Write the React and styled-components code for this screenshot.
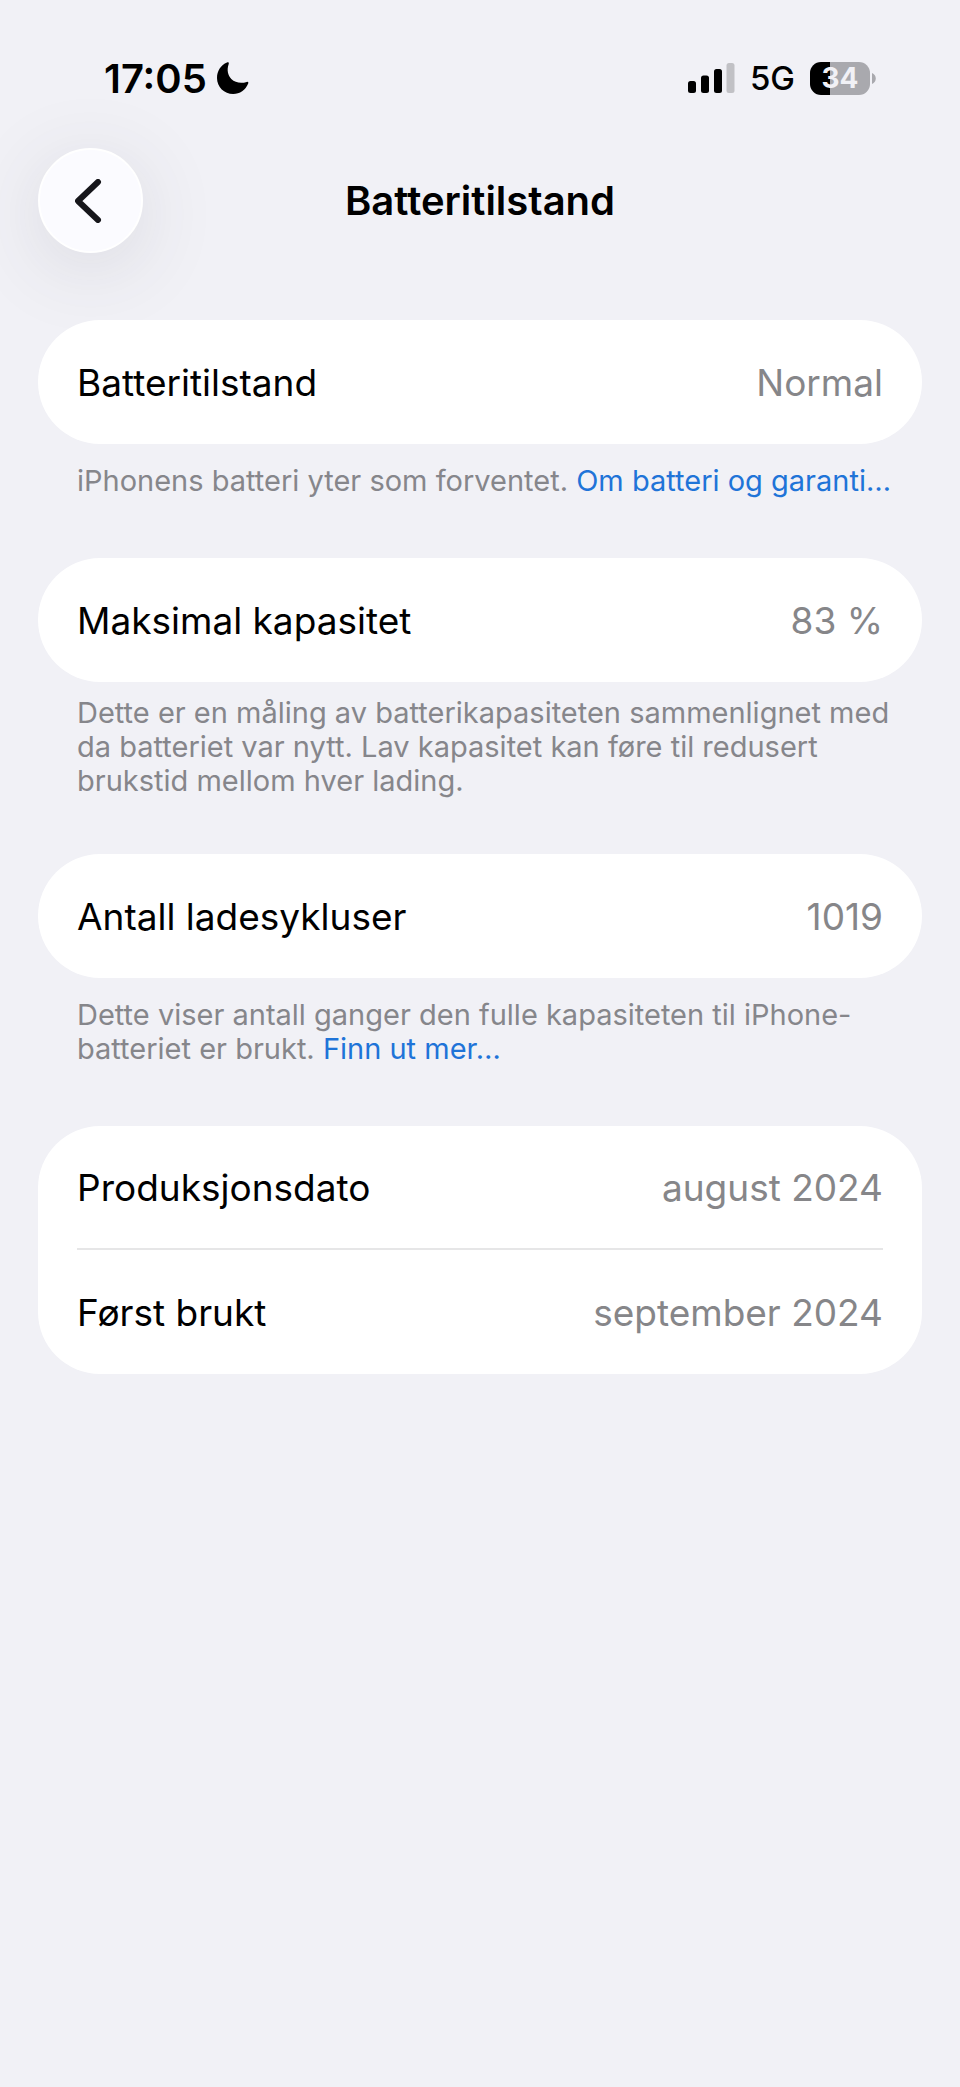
import React from "react";
import styled, { createGlobalStyle } from "styled-components";

const GlobalStyle = createGlobalStyle`
  * {
    box-sizing: border-box;
  }

  body {
    margin: 0;
    background: #f1f1f6;
    color: #000;
    font-family: Inter, "Liberation Sans", sans-serif;
  }
`;

const Screen = styled.div`
  min-height: 100vh;
`;

const StatusBar = styled.header`
  display: flex;
  align-items: center;
  justify-content: space-between;
  height: 148px;
  padding: 8px 84px 0 104px;
`;

const Time = styled.div`
  display: flex;
  align-items: center;
  gap: 10px;
  font-size: 40px;
  font-weight: 600;
`;

const Indicators = styled.div`
  display: flex;
  align-items: center;
  gap: 15px;
`;

const Network = styled.span`
  font-size: 33px;
  font-weight: 500;
`;

const Battery = styled.div`
  display: flex;
  align-items: center;
  gap: 2px;
`;

const BatteryBody = styled.div`
  display: flex;
  align-items: center;
  justify-content: center;
  width: 60px;
  height: 33px;
  border-radius: 11px;
  background: linear-gradient(90deg, #000 ${(props) => props.$level}%, #a9a9ae 0);
  color: #f1f1f6;
  font-size: 28px;
  font-weight: 700;
`;

const NavBar = styled.nav`
  display: grid;
  grid-template-columns: 1fr auto 1fr;
  align-items: center;
  padding: 0 38px;

  > h1 {
    margin: 0;
    font-size: 40px;
    font-weight: 600;
  }
`;

const BackButton = styled.button`
  display: flex;
  align-items: center;
  justify-content: center;
  width: 105px;
  height: 105px;
  padding: 0;
  border: 2px solid #fff;
  border-radius: 50%;
  background: #fbfbff;
  box-shadow: 0 14px 80px rgba(60, 60, 80, 0.13);
  color: #16161b;
`;

const Main = styled.main`
  display: flex;
  flex-direction: column;
  gap: 56px;
  padding: 67px 38px;
`;

const Card = styled.dl`
  margin: 0;
  padding: 0 39px;
  border-radius: 62px;
  background: #fff;
`;

const Row = styled.div`
  display: flex;
  align-items: center;
  justify-content: space-between;
  min-height: 124px;
  font-size: 37px;

  &:not(:last-child) {
    border-bottom: 2px solid #e6e6e7;
  }
  > dd {
    margin: 0;
    color: #868689;
  }
`;

const Note = styled.p`
  margin: 0;
  padding: ${(props) => (props.$linked ? "20px 24px 4px 39px" : "14px 24px 0 39px")};
  color: #86868b;
  font-size: 29px;
  line-height: 34px;

  > a {
    color: #1f74d8;
    text-decoration: none;
  }
`;

const MoonIcon = () => (
  <svg width="32" height="32" viewBox="0 0 32 32" aria-hidden="true">
    <path
      d="M10 .6C11.200 0 12.200.6 11.700 2C9.500 8.200 11 13.500 14.300 17C18.300 20.800 24 21.800 29.700 19.900C31 19.500 31.700 20.300 31.200 21.500C28.500 28 22.800 32 16.200 32C7.200 32 0 25 0 16C0 9 3.800 3.200 10 .6Z"
      fill="#000"
    />
  </svg>
);

const SignalIcon = () => (
  <svg width="47" height="30" viewBox="0 0 47 30" role="img" aria-label="Signal">
    <rect x="0" y="18" width="8" height="12" rx="2.500" />
    <rect x="13" y="12.500" width="8" height="17.500" rx="2.500" />
    <rect x="26" y="6" width="8" height="24" rx="2.500" />
    <rect x="38.500" y="0" width="8" height="30" rx="2.500" fill="#c1c1c5" />
  </svg>
);

const ChevronIcon = () => (
  <svg width="32" height="44" viewBox="0 0 32 44" aria-hidden="true">
    <path
      d="M23 3L3 22L23 41"
      fill="none"
      stroke="currentColor"
      strokeWidth="6"
      strokeLinecap="round"
      strokeLinejoin="round"
    />
  </svg>
);

const BatteryTip = () => (
  <svg width="4" height="11" viewBox="0 0 4 11" aria-hidden="true">
    <path d="M0 0C5 2 5 9 0 11Z" fill="#a9a9ae" />
  </svg>
);

const App = () => {
  const level = 34;

  return (
    <Screen>
      <GlobalStyle />
      <StatusBar>
        <Time>
          <span>17:05</span>
          <MoonIcon />
        </Time>
        <Indicators>
          <SignalIcon />
          <Network>5G</Network>
          <Battery>
            <BatteryBody $level={level}>{level}</BatteryBody>
            <BatteryTip />
          </Battery>
        </Indicators>
      </StatusBar>
      <NavBar>
        <BackButton type="button" aria-label="Tilbake">
          <ChevronIcon />
        </BackButton>
        <h1>Batteritilstand</h1>
      </NavBar>
      <Main>
        <section>
          <Card>
            <Row>
              <dt>Batteritilstand</dt>
              <dd>Normal</dd>
            </Row>
          </Card>
          <Note $linked>
            iPhonens batteri yter som forventet. <a href="#garanti">Om batteri og garanti…</a>
          </Note>
        </section>
        <section>
          <Card>
            <Row>
              <dt>Maksimal kapasitet</dt>
              <dd>83 %</dd>
            </Row>
          </Card>
          <Note>
            Dette er en måling av batterikapasiteten sammenlignet med da batteriet var nytt. Lav
            kapasitet kan føre til redusert brukstid mellom hver lading.
          </Note>
        </section>
        <section>
          <Card>
            <Row>
              <dt>Antall ladesykluser</dt>
              <dd>1019</dd>
            </Row>
          </Card>
          <Note $linked>
            Dette viser antall ganger den fulle kapasiteten til iPhone-batteriet er brukt.{" "}
            <a href="#sykluser">Finn ut mer…</a>
          </Note>
        </section>
        <section>
          <Card>
            <Row>
              <dt>Produksjonsdato</dt>
              <dd>august 2024</dd>
            </Row>
            <Row>
              <dt>Først brukt</dt>
              <dd>september 2024</dd>
            </Row>
          </Card>
        </section>
      </Main>
    </Screen>
  );
};

export default App;
